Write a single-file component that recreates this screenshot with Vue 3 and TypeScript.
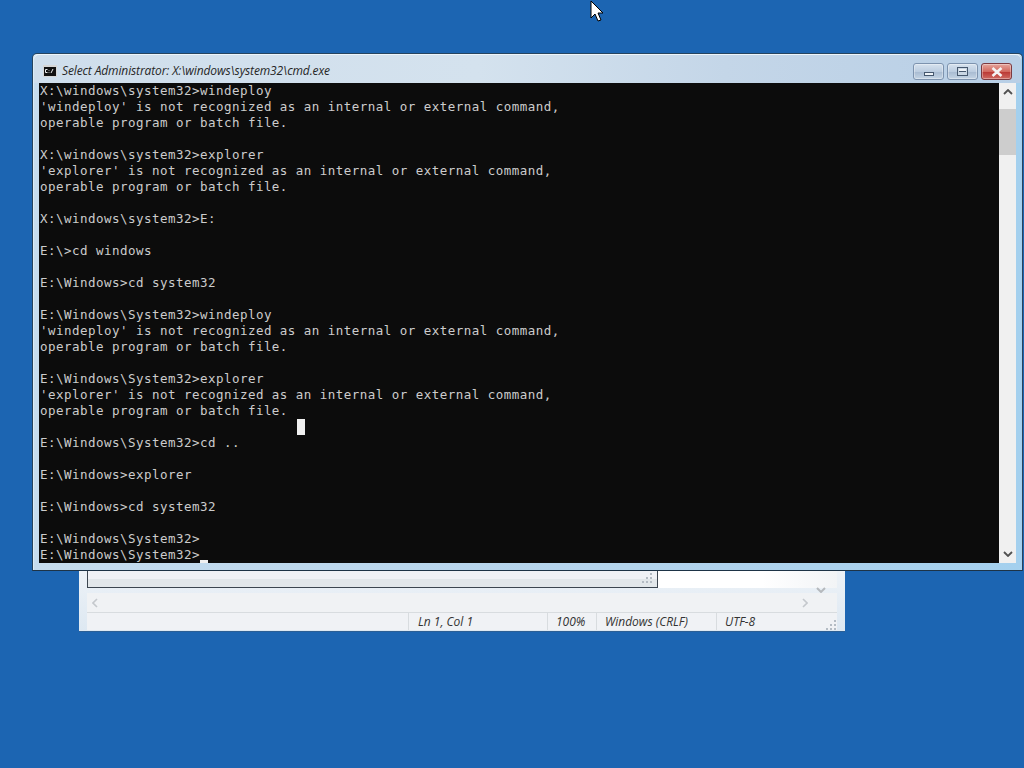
<template>
  <div class="desktop">
    <!-- notepad window peeking out behind the console -->
    <div class="notepad">
      <div class="notepad-body">
        <div class="dialog">
          <svg class="grip dialog-grip" viewBox="0 0 10 10" width="10" height="10">
            <rect v-for="g in grip" :key="g[0] + '-' + g[1]" :x="g[0]" :y="g[1]" width="2" height="2" fill="#b4bcc4" />
          </svg>
        </div>
        <div class="v-arrow">
          <svg viewBox="0 0 10 6" width="10" height="6"><path d="M1 1l4 4 4-4" fill="none" stroke="#b5b9bd" stroke-width="2" /></svg>
        </div>
      </div>
      <div class="h-scroll">
        <svg viewBox="0 0 6 10" width="6" height="10"><path d="M5 1L1 5l4 4" fill="none" stroke="#c4c8cc" stroke-width="1.6" /></svg>
        <svg viewBox="0 0 6 10" width="6" height="10"><path d="M1 1l4 4-4 4" fill="none" stroke="#c4c8cc" stroke-width="1.6" /></svg>
      </div>
      <div class="status">
        <span class="cell cell-fill"></span>
        <span class="cell cell-pos">Ln 1, Col 1</span>
        <span class="cell cell-zoom">100%</span>
        <span class="cell cell-eol">Windows (CRLF)</span>
        <span class="cell cell-enc">UTF-8</span>
        <svg class="grip" viewBox="0 0 10 10" width="10" height="10">
          <rect v-for="g in grip" :key="g[0] + '-' + g[1]" :x="g[0]" :y="g[1]" width="2" height="2" fill="#b4bcc4" />
        </svg>
      </div>
    </div>

    <!-- console window -->
    <div class="window">
      <div class="titlebar">
        <svg class="app-icon" viewBox="0 0 14 12" width="14" height="12">
          <rect width="14" height="12" fill="#d6d6d6" />
          <rect x="1" y="2" width="12" height="9" fill="#111" />
          <path d="M2.5 4.5h2M2.5 4.5v3h2M6 5v.6M6 7v.6M8 8l2-4" stroke="#eee" fill="none" stroke-width="1" />
        </svg>
        <span class="title">Select Administrator: X:\windows\system32\cmd.exe</span>
        <div class="controls">
          <div class="ctl">
            <span class="min-glyph"></span>
          </div>
          <div class="ctl">
            <span class="max-glyph"></span>
          </div>
          <div class="ctl close">
            <svg viewBox="0 0 12 10" width="12" height="10"><path d="M1.5 1l9 8M10.5 1l-9 8" stroke="#f4f4f4" stroke-width="2.6" /></svg>
          </div>
        </div>
      </div>
      <div class="client">
        <div class="console">
          <div v-for="(line, i) in lines" :key="i" class="line">{{ line }}</div>
          <span class="selection"></span>
          <span class="caret"></span>
        </div>
        <div class="scrollbar">
          <svg class="arrow" viewBox="0 0 10 6" width="10" height="6"><path d="M1 5l4-4 4 4" fill="none" stroke="#505050" stroke-width="1.8" /></svg>
          <div class="track"><div class="thumb"></div></div>
          <svg class="arrow" viewBox="0 0 10 6" width="10" height="6"><path d="M1 1l4 4 4-4" fill="none" stroke="#505050" stroke-width="1.8" /></svg>
        </div>
      </div>
    </div>

    <!-- mouse pointer -->
    <svg class="pointer" viewBox="0 0 13 22" width="13" height="22">
      <path d="M1 1v17l4-4 3 7 3-1-3-7h5z" fill="#fff" stroke="#000" stroke-width="1" />
    </svg>
  </div>
</template>

<script setup lang="ts">
const lines: string[] = [
  "X:\\windows\\system32>windeploy",
  "'windeploy' is not recognized as an internal or external command,",
  "operable program or batch file.",
  "",
  "X:\\windows\\system32>explorer",
  "'explorer' is not recognized as an internal or external command,",
  "operable program or batch file.",
  "",
  "X:\\windows\\system32>E:",
  "",
  "E:\\>cd windows",
  "",
  "E:\\Windows>cd system32",
  "",
  "E:\\Windows\\System32>windeploy",
  "'windeploy' is not recognized as an internal or external command,",
  "operable program or batch file.",
  "",
  "E:\\Windows\\System32>explorer",
  "'explorer' is not recognized as an internal or external command,",
  "operable program or batch file.",
  "",
  "E:\\Windows\\System32>cd ..",
  "",
  "E:\\Windows>explorer",
  "",
  "E:\\Windows>cd system32",
  "",
  "E:\\Windows\\System32>",
  "E:\\Windows\\System32>",
];

// resize grip dots
const grip: number[][] = [
  [8, 0],
  [4, 4],
  [8, 4],
  [0, 8],
  [4, 8],
  [8, 8],
];
</script>

<style>
html,
body {
  margin: 0;
  background: #1c65b2;
}
</style>

<style scoped>
.desktop {
  position: relative;
  width: 1024px;
  height: 768px;
  overflow: hidden;
  background: #1c65b2;
  font-family: "Open Sans", "Liberation Sans", sans-serif;
}

.notepad {
  position: absolute;
  left: 79px;
  top: 560px;
  width: 766px;
  height: 72px;
  box-sizing: border-box;
  padding: 0 8px 7px;
  display: flex;
  flex-direction: column;
  background: linear-gradient(#f0f4f8, #dde8f2);
  border-bottom: 1px solid #2b5f95;
}
.notepad-body {
  display: flex;
  height: 23px;
  flex: none;
  padding-top: 5px;
  padding-right: 8px;
  background: linear-gradient(90deg, #fff 0, #fff 90%, #f2f4f6);
}
.dialog {
  position: relative;
  width: 571px;
  height: 28px;
  margin-top: -5px;
  box-sizing: border-box;
  border: 1px solid #3c4650;
  border-top: none;
  background: linear-gradient(#f0f2f6 70%, #e2e7ea 70%);
}
.dialog-grip {
  position: absolute;
  right: 5px;
  bottom: 4px;
}
.v-arrow {
  margin-left: auto;
  margin-top: 11px;
  margin-right: 3px;
}
.h-scroll {
  height: 19px;
  margin-top: 5px;
  flex: none;
  display: flex;
  align-items: center;
  justify-content: space-between;
  padding: 0 29px 0 5px;
  border-bottom: 1px solid #d8dcdf;
  background: #f0f2f4;
}
.status {
  flex: 1;
  display: flex;
  align-items: center;
  background: #f0f2f5;
  font-size: 12px;
  font-style: italic;
  color: #333;
}
.cell {
  box-sizing: border-box;
  height: 100%;
  display: flex;
  align-items: center;
  border-right: 1px solid #d8dcdf;
  white-space: nowrap;
}
.cell-fill {
  width: 322px;
}
.cell-pos {
  width: 139px;
  padding-left: 9px;
}
.cell-zoom {
  width: 49px;
  padding-left: 8px;
}
.cell-eol {
  width: 120px;
  padding-left: 8px;
}
.cell-enc {
  flex: 1;
  border-right: none;
  padding-left: 8px;
}
.status .grip {
  margin-right: 1px;
  margin-top: 6px;
}

.window {
  position: absolute;
  left: 32px;
  top: 53px;
  width: 991px;
  height: 518px;
  box-sizing: border-box;
  padding: 0 6px 7px;
  display: flex;
  flex-direction: column;
  border: 1px solid #26445f;
  border-bottom-color: #1d3346;
  border-radius: 5px 5px 0 0;
  background: linear-gradient(90deg, #c6dcee, #b4d4ec 60%, #a4d0ee);
  box-shadow: inset 0 1px 0 #e4f0f8, inset 1px 0 0 #dcecf6;
}
.titlebar {
  height: 29px;
  flex: none;
  display: flex;
  align-items: center;
  margin: 0 -5px 0;
  padding: 4px 5px 0 9px;
  box-sizing: border-box;
  border-radius: 5px 5px 0 0;
  background: linear-gradient(90deg, #cfdeec 0, #d4e2ee 45%, #c4d6e8 70%, #b8cfe6 100%);
  box-shadow: inset 0 1px 0 #eef5fa;
}
.app-icon {
  flex: none;
  margin-right: 5px;
}
.title {
  font-size: 12px;
  font-style: italic;
  color: #262626;
  letter-spacing: -0.12px;
  white-space: nowrap;
}
.controls {
  margin-left: auto;
  display: flex;
  gap: 3px;
  align-self: flex-start;
  margin-top: 5px;
  margin-right: 4px;
}
.ctl {
  width: 31px;
  height: 17px;
  box-sizing: border-box;
  border: 1px solid #7d93ae;
  border-radius: 3px;
  display: flex;
  align-items: center;
  justify-content: center;
  background: linear-gradient(#d6e2ee, #bccde0 50%, #a9bcd2 55%, #c4d4e4);
  box-shadow: inset 0 0 0 1px rgba(255, 255, 255, 0.35);
}
.ctl.close {
  border-color: #7c3a40;
  background: linear-gradient(#e5a59c, #d2695f 50%, #bb3a36 55%, #cf6a62);
}
.min-glyph {
  display: block;
  width: 10px;
  height: 4px;
  margin-top: 4px;
  box-sizing: border-box;
  background: #eef3f8;
  border: 1px solid #46586e;
}
.max-glyph {
  display: block;
  width: 11px;
  height: 9px;
  box-sizing: border-box;
  border: 1px solid #46586e;
  background: #cad7e4;
  position: relative;
}
.max-glyph::after {
  content: "";
  position: absolute;
  left: 1px;
  top: 1px;
  width: 7px;
  height: 3px;
  box-sizing: border-box;
  background: #eef3f8;
  border-bottom: 1px solid #46586e;
}

.client {
  flex: 1;
  display: flex;
  min-height: 0;
}
.console {
  position: relative;
  flex: 1;
  overflow: hidden;
  background: #0c0c0c;
  color: #cccccc;
  padding-left: 1px;
  font-family: "DejaVu Sans Mono", "Liberation Mono", monospace;
  font-size: 12.5px;
  letter-spacing: 0.47px;
}
.line {
  height: 16px;
  line-height: 16px;
  white-space: pre;
}
.selection {
  position: absolute;
  left: 258px;
  top: 336px;
  width: 8px;
  height: 16px;
  background: #f0f0f0;
}
.caret {
  position: absolute;
  left: 161px;
  top: 477px;
  width: 8px;
  height: 3px;
  background: #f0f0f0;
}
.scrollbar {
  width: 17px;
  flex: none;
  display: flex;
  flex-direction: column;
  align-items: center;
  background: #f0f0f0;
}
.arrow {
  flex: none;
  margin: 6px 0;
}
.track {
  flex: 1;
  width: 100%;
  min-height: 0;
}
.thumb {
  height: 46px;
  margin-top: 8px;
  background: #cdcdcd;
}

.pointer {
  position: absolute;
  left: 590px;
  top: 0;
}
</style>
